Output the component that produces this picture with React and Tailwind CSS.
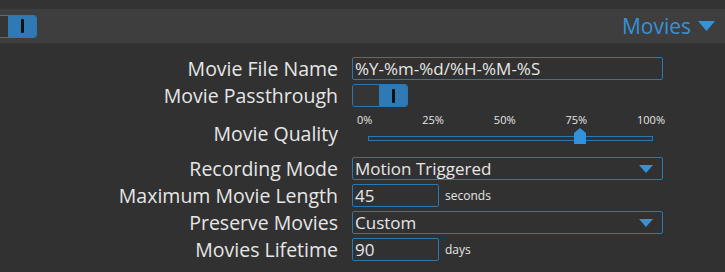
import { useState } from 'react'

const LABEL_W = 'w-[338px]'

function Toggle({ on = true }) {
  return (
    <div className="flex h-[23px] w-[56px] rounded-[3px] border border-[#2a78b0] overflow-hidden">
      <div className="flex-1 bg-[#353535]" />
      <div className={'w-[28px] flex items-center justify-center ' + (on ? 'bg-[#2f7ab5]' : 'bg-[#353535]')}>
        <div className="w-[3px] h-[14px] bg-[#111] rounded-[1px]" />
      </div>
    </div>
  )
}

function Row({ label, children, h = 'h-[27px]' }) {
  return (
    <div className={'flex items-center ' + h}>
      <div className={LABEL_W + ' text-right text-[19.5px] text-[#e6e6e6] leading-none'}>{label}</div>
      <div className="ml-[14px] flex items-center">{children}</div>
    </div>
  )
}

function Caret() {
  return (
    <svg width="14" height="10" viewBox="0 0 14 10">
      <polygon points="0,1 14,1 7,9" fill="#3592d8" />
    </svg>
  )
}

function Select({ value }) {
  return (
    <div className="flex items-center justify-between w-[311px] h-[23px] border border-[#2a78b0] rounded-[2px] pl-[2px] pr-[9px] text-[17px] text-[#e6e6e6] leading-none">
      <span>{value}</span>
      <Caret />
    </div>
  )
}

function TextInput({ value, w = 'w-[311px]' }) {
  return (
    <div className={w + ' h-[23px] border border-[#2a78b0] rounded-[2px] pl-[2px] flex items-center text-[17px] text-[#e6e6e6] leading-none'}>
      {value}
    </div>
  )
}

export default function App() {
  const [quality] = useState(75)
  return (
    <div className="w-[725px] h-[272px] bg-[#313131] overflow-hidden" style={{ fontFamily: '"Open Sans", "DejaVu Sans", sans-serif' }}>
      <div className="h-[9px] bg-[#333333]" />
      <div className="h-[34px] bg-[#3e3e3e] flex items-center justify-between">
        <div className="-ml-[19px]"><Toggle /></div>
        <div className="flex items-center gap-[7px] pr-[10px] text-[#3592d8] text-[21px] leading-none">
          <span>Movies</span>
          <svg width="17" height="12" viewBox="0 0 17 12">
            <polygon points="0,1 17,1 8.5,11" fill="#3592d8" />
          </svg>
        </div>
      </div>

      <div className="pt-[12px]">
        <Row label="Movie File Name"><TextInput value="%Y-%m-%d/%H-%M-%S" /></Row>
        <Row label="Movie Passthrough"><Toggle /></Row>
        <div className="flex h-[46px]">
          <div className={LABEL_W + ' text-right text-[19.5px] text-[#e6e6e6] leading-none pt-[15px]'}>Movie Quality</div>
          <div className="ml-[14px] w-[320px] pt-[5px]">
            <div className="flex justify-between pl-[5px] w-[313px] text-[11px] text-[#e6e6e6] leading-none">
              <span>0%</span><span>25%</span><span>50%</span><span>75%</span><span>100%</span>
            </div>
            <div className="relative ml-[16px] mt-[11px] w-[285px] h-[5px] border border-[#2a78b0]">
              <svg className="absolute top-[-9px]" style={{ left: `${(quality / 100) * 285 - 9}px` }} width="12" height="16" viewBox="0 0 12 16">
                <polygon points="6,0 12,5 12,16 0,16 0,5" fill="#3592d8" />
              </svg>
            </div>
          </div>
        </div>
        <Row label="Recording Mode"><Select value="Motion Triggered" /></Row>
        <Row label="Maximum Movie Length">
          <TextInput value="45" w="w-[87px]" />
          <span className="ml-[6px] text-[12px] text-[#e6e6e6]">seconds</span>
        </Row>
        <Row label="Preserve Movies"><Select value="Custom" /></Row>
        <Row label="Movies Lifetime">
          <TextInput value="90" w="w-[87px]" />
          <span className="ml-[6px] text-[12px] text-[#e6e6e6]">days</span>
        </Row>
      </div>
    </div>
  )
}
